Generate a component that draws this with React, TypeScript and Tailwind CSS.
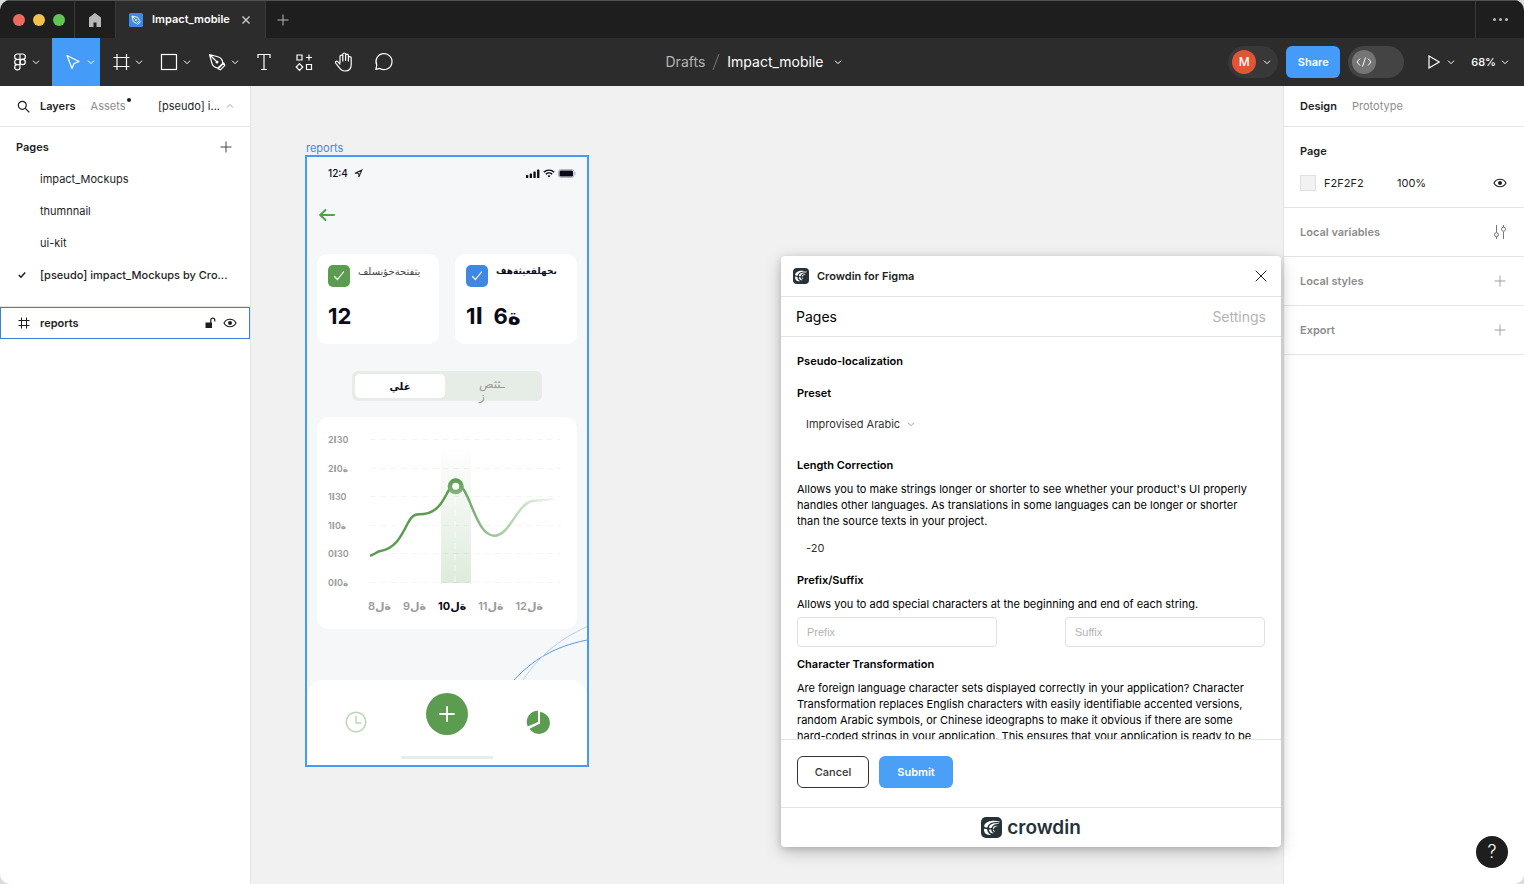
import type { ReactNode } from "react";
import { SiCrowdin } from "react-icons/si";

function Chevron({ className = "", up = false }: { className?: string; up?: boolean }) {
  return (
    <svg viewBox="0 0 12 12" width="12" height="12" fill="none" stroke="currentColor" className={`shrink-0 ${className}`} aria-hidden="true">
      <path d={up ? "M3 7.5 6 4.5 9 7.5" : "M3 4.7 6 7.7 9 4.7"} />
    </svg>
  );
}

function Plus({ className = "" }: { className?: string }) {
  return (
    <svg viewBox="0 0 12 12" width="12" height="12" fill="none" stroke="currentColor" className={className} aria-hidden="true">
      <path d="M6 .5v11M.5 6h11" />
    </svg>
  );
}

function Eye() {
  return (
    <svg viewBox="0 0 14 10" width="14" height="10" fill="none" stroke="#1e1e1e" aria-hidden="true">
      <path d="M1 5C2.2 2.6 4.400 1.200 7 1.200S11.800 2.600 13 5C11.800 7.400 9.600 8.800 7 8.800S2.200 7.400 1 5Z" strokeWidth="1.100" />
      <circle cx="7" cy="5" r="2" fill="#1e1e1e" stroke="none" />
    </svg>
  );
}

function CrowdinMark({ className }: { className: string }) {
  return (
    <span className={`flex items-center justify-center bg-[#263238] text-white ${className}`}>
      <SiCrowdin className="h-3/4 w-3/4" aria-hidden="true" />
    </span>
  );
}

function TitleBar() {
  return (
    <header className="flex h-[38px] shrink-0 border-t border-[#4f5251] bg-[#1e1e1e]">
      <div className="flex w-[75px] items-center gap-2 border-r border-[#3a3a3a] pl-[13px]">
        <span className="size-3 rounded-full bg-[#ed6a5e]" />
        <span className="size-3 rounded-full bg-[#f5bf4f]" />
        <span className="size-3 rounded-full bg-[#61c554]" />
      </div>
      <button aria-label="Home" className="flex w-[41px] items-center justify-center border-r border-[#3a3a3a]">
        <svg viewBox="0 0 14 14" width="14" height="14" fill="#b8b8b8" aria-hidden="true">
          <path d="M7 0 1 4.600V14h4.500V9.500h3V14H13V4.600Z" />
        </svg>
      </button>
      <div className="flex w-[150px] items-center border-r border-[#3a3a3a] bg-[#2c2c2c] pl-[13px] text-white">
        <svg viewBox="0 0 14 14" width="14" height="14" fill="none" stroke="#fff" aria-hidden="true">
          <rect width="14" height="14" rx="1.500" fill="#3d8ae6" stroke="none" />
          <path d="M3 3l5.500 1.200 2 3.300-3 3-3.300-2ZM3 3l3.600 3.600" strokeWidth=".9" />
          <circle cx="7" cy="7" r=".9" fill="#fff" stroke="none" />
          <path d="M8.400 11.600l3.200-3.200" />
        </svg>
        <span className="ml-[9px] text-[11px] font-semibold">Impact_mobile</span>
        <button aria-label="Close tab" className="ml-[11px] text-[#c4c4c4]">
          <svg viewBox="0 0 10 10" width="10" height="10" fill="none" stroke="currentColor" strokeWidth="1.500" aria-hidden="true">
            <path d="M1.500 1.500l7 7M8.500 1.500l-7 7" />
          </svg>
        </button>
      </div>
      <button aria-label="New tab" className="flex w-[34px] items-center justify-center text-[#b8b8b8]">
        <Plus />
      </button>
      <button aria-label="More" className="ml-auto flex w-[49px] items-center justify-center gap-[3px] border-l border-[#3a3a3a]">
        <span className="size-[3px] rounded-full bg-[#b8b8b8]" />
        <span className="size-[3px] rounded-full bg-[#b8b8b8]" />
        <span className="size-[3px] rounded-full bg-[#b8b8b8]" />
      </button>
    </header>
  );
}

function MenuTool({ label, active = false, children }: { label: string; active?: boolean; children: ReactNode }) {
  return (
    <button aria-label={label} className={`flex h-12 w-12 items-center pl-[9px] ${active ? "bg-[#459cf8]" : ""}`}>
      <svg viewBox="0 0 24 24" width="24" height="24" fill="none" stroke="#fff" strokeWidth="1.200" aria-hidden="true">
        {children}
      </svg>
      <Chevron />
    </button>
  );
}

function Tool({ label, children }: { label: string; children: ReactNode }) {
  return (
    <button aria-label={label} className="flex h-12 w-10 items-center justify-center">
      <svg viewBox="0 0 24 24" width="24" height="24" fill="none" stroke="#fff" strokeWidth="1.200" aria-hidden="true">
        {children}
      </svg>
    </button>
  );
}

function Toolbar() {
  return (
    <div className="flex h-12 shrink-0 items-center bg-[#2c2c2c] text-white">
      <div className="flex flex-1">
        <button aria-label="Main menu" className="flex h-12 w-[52px] items-center pl-2.5">
          <svg viewBox="0 0 20 20" width="20" height="20" fill="none" stroke="#fff" strokeWidth="1.200" aria-hidden="true">
            <path d="M10 2H7.300a2.650 2.650 0 0 0 0 5.300H10ZM10 2h2.700a2.650 2.650 0 0 1 0 5.300H10ZM10 7.300H7.300a2.650 2.650 0 0 0 0 5.300H10ZM10 12.600H7.300a2.650 2.650 0 1 0 2.700 2.650Z" />
            <circle cx="12.650" cy="9.950" r="2.650" />
          </svg>
          <Chevron />
        </button>
        <MenuTool label="Move" active>
          <path d="M6 5.500l12 6-5 2-2 5Z" strokeLinejoin="round" />
        </MenuTool>
        <MenuTool label="Frame">
          <path d="M8 4v16M17.500 4v16M4.500 7.500h16M4.500 16.500h16" />
        </MenuTool>
        <MenuTool label="Rectangle">
          <rect x="4.500" y="4.500" width="15" height="15" />
        </MenuTool>
        <MenuTool label="Pen">
          <path d="M4.500 4.500l9 2.500c2.500.8 4.500 3.600 4.200 6.300l-4.400 4.400C10.500 18 7.800 16 7 13.500ZM4.500 4.500l6.500 6.500M13 18.800l5.800-5.800 1 2.400-4.400 4.400Z" strokeLinejoin="round" />
          <circle cx="12" cy="12" r="1.500" fill="#fff" stroke="none" />
        </MenuTool>
        <Tool label="Text">
          <path d="M6 8V4.500h12V8M12 4.500v15M9 19.500h6" />
        </Tool>
        <Tool label="Resources">
          <path d="M5 5h5v5H5ZM14.500 14.500h5v5h-5ZM7.500 13.600l3.300 3.400-3.300 3.400L4.200 17ZM17 4.500v6M14 7.500h6" />
        </Tool>
        <Tool label="Hand">
          <path d="M8 12.500V6.600a1.400 1.400 0 0 1 2.800 0V11M10.800 10.500V4.400a1.400 1.400 0 0 1 2.800 0v6.100M13.600 10.500V5.500a1.400 1.400 0 0 1 2.800 0V11M16.400 11V8a1.400 1.400 0 0 1 2.800 0v6.500c0 4-2.500 6.500-6.200 6.500-3 0-4.500-1.200-6-3.700L3.600 13c-.7-1.300.9-2.500 2-1.400L8 14" strokeLinecap="round" strokeLinejoin="round" />
        </Tool>
        <Tool label="Comment">
          <path d="M3.800 19.300l1-4.200a8 8 0 1 1 3 3.300Z" strokeLinejoin="round" />
        </Tool>
      </div>
      <div className="flex items-center pr-0.5 text-sm">
        <span className="text-[#b3b3b3]">Drafts</span>
        <svg viewBox="0 0 8 16" width="8" height="16" stroke="#7a7a7a" className="mx-[7px]" aria-hidden="true">
          <path d="M1 16 7 0" />
        </svg>
        <button className="flex items-center gap-2">
          Impact_mobile
          <Chevron />
        </button>
      </div>
      <div className="flex flex-1 items-center justify-end pr-[13px] text-[11px] font-medium">
        <button aria-label="Account" className="flex h-8 w-[50px] items-center gap-[5px] rounded-full bg-[#383838] pl-1">
          <span className="flex size-6 items-center justify-center rounded-full bg-[#e25534] text-xs">M</span>
          <Chevron />
        </button>
        <button className="ml-2 h-8 w-[54px] rounded-md bg-[#459cf8] font-semibold">Share</button>
        <button aria-label="Dev mode" className="ml-2 flex h-8 w-14 items-center rounded-full bg-[#444] pl-1">
          <span className="flex size-6 items-center justify-center rounded-full bg-[#757575]">
            <svg viewBox="0 0 16 12" width="16" height="12" fill="none" stroke="#fff" aria-hidden="true">
              <path d="M4 2.500 1 6l3 3.500M12 2.500 15 6l-3 3.500M9.500 1.500l-3 9" />
            </svg>
          </span>
        </button>
        <button aria-label="Present" className="ml-6 flex items-center gap-[5px]">
          <svg viewBox="0 0 12 14" width="12" height="14" fill="none" stroke="#fff" strokeWidth="1.200" aria-hidden="true">
            <path d="M1 1l10.300 6L1 13Z" />
          </svg>
          <Chevron />
        </button>
        <button className="ml-3.5 flex items-center gap-[3px]">
          68%
          <Chevron />
        </button>
      </div>
    </div>
  );
}

const pages = ["impact_Mockups", "thumnnail", "ui-kit"];

function LayersPanel() {
  return (
    <aside className="w-[251px] shrink-0 border-r border-[#e4e4e4] bg-white text-[11px] text-[#1e1e1e]">
      <div className="flex h-[41px] items-center border-b border-[#e4e4e4] pl-[17px]">
        <button aria-label="Search">
          <svg viewBox="0 0 13 13" width="13" height="13" fill="none" stroke="currentColor" strokeWidth="1.200" aria-hidden="true">
            <circle cx="5.300" cy="5.300" r="4" />
            <path d="M8.300 8.300l4 4" />
          </svg>
        </button>
        <button className="ml-2.5 font-semibold">Layers</button>
        <button className="relative ml-[15px] text-[#8c8c8c]">
          Assets
          <span className="absolute -right-1.5 top-0 size-1 rounded-full bg-[#1e1e1e]" />
        </button>
        <button className="ml-auto mr-3.5 flex items-center gap-1">
          [pseudo] i...
          <Chevron up className="text-[#a0a0a0]" />
        </button>
      </div>
      <div className="mt-1 flex h-8 items-center justify-between pl-4 pr-[18px]">
        <h2 className="font-semibold">Pages</h2>
        <button aria-label="Add page">
          <Plus className="text-[#444]" />
        </button>
      </div>
      <ul>
        {pages.map((name) => (
          <li key={name} className="flex h-8 items-center pl-10">
            {name}
          </li>
        ))}
        <li className="flex h-8 items-center font-medium">
          <svg viewBox="0 0 8 8" width="8" height="8" fill="none" stroke="currentColor" strokeWidth="1.500" className="ml-[18px] mr-3.5" aria-hidden="true">
            <path d="M.8 4l2.200 2.200L7.200 1.500" />
          </svg>
          [pseudo] impact_Mockups by Cro...
        </li>
      </ul>
      <div className="h-4 border-b border-[#e4e4e4]" />
      <div className="flex h-8 items-center border border-[#3d7fd9] pl-[17px] pr-3 font-semibold">
        <svg viewBox="0 0 12 12" width="12" height="12" fill="none" stroke="currentColor" aria-hidden="true">
          <path d="M3.500 .5v11M8.500 .5v11M.5 3.500h11M.5 8.500h11" />
        </svg>
        <span className="ml-2.5">reports</span>
        <svg viewBox="0 0 11 12" width="11" height="12" fill="none" stroke="currentColor" className="ml-auto mr-[7px]" aria-hidden="true">
          <rect x=".5" y="5.500" width="6.500" height="5.500" fill="currentColor" stroke="none" />
          <path d="M5.800 6V3.200a2 2 0 0 1 4 0V4.500" strokeWidth="1.200" />
        </svg>
        <Eye />
      </div>
    </aside>
  );
}

function StatCard({ color, label, bold = false, children }: { color: string; label: string; bold?: boolean; children: ReactNode }) {
  return (
    <div className="h-[90px] flex-1 rounded-[10px] bg-white px-[11px] pt-[11px]">
      <div className="flex gap-2">
        <span className={`flex size-[22px] items-center justify-center rounded-[5px] ${color}`}>
          <svg viewBox="0 0 12 12" width="12" height="12" fill="none" stroke="#fff" strokeWidth="1.200" strokeLinecap="round" strokeLinejoin="round" aria-hidden="true">
            <path d="M1.500 6.500l3 3L10.500 2" />
          </svg>
        </span>
        <span dir="rtl" className={`leading-3 ${bold ? "text-[9px] font-bold" : "text-[10px] text-[#444]"}`}>
          {label}
        </span>
      </div>
      <div className="mt-[15px] whitespace-pre text-[22px] font-bold leading-7 [unicode-bidi:bidi-override]">{children}</div>
    </div>
  );
}

const yLabels = ["2ا30", "2ا0ة", "1ا30", "1ا0ة", "0ا30", "0ا0ة"];
const xLabels = ["8ةل", "9ةل", "10ةل", "11ةل", "12ةل"];
const gridRows = [6, 35, 63, 92, 120, 149];

function ChartCard() {
  return (
    <div className="mt-4 h-[212px] rounded-xl bg-white px-[11px] pt-4">
      <div className="flex">
        <div className="mt-px flex h-[155px] w-[42px] flex-col justify-between text-[9px] font-semibold leading-3 text-[#9b9b9b]">
          {yLabels.map((l) => (
            <span key={l} className="[unicode-bidi:bidi-override]">
              {l}
            </span>
          ))}
        </div>
        <svg viewBox="0 0 192 155" width="192" height="155" fill="none" className="overflow-visible" aria-hidden="true">
          <defs>
            <linearGradient id="band" x1="0" y1="0" x2="0" y2="1">
              <stop offset="0" stopColor="#5b9c50" stopOpacity="0" />
              <stop offset="1" stopColor="#5b9c50" stopOpacity=".2" />
            </linearGradient>
            <linearGradient id="line" gradientUnits="userSpaceOnUse" x1="0" y1="0" x2="186" y2="0">
              <stop offset="0" stopColor="#5b9c50" />
              <stop offset=".45" stopColor="#5b9c50" />
              <stop offset=".65" stopColor="#5b9c50" stopOpacity=".6" />
              <stop offset="1" stopColor="#5b9c50" stopOpacity=".05" />
            </linearGradient>
            <linearGradient id="dot" x1="0" y1="0" x2="0" y2="1">
              <stop offset="0" stopColor="#5b9c50" />
              <stop offset="1" stopColor="#83b57b" />
            </linearGradient>
          </defs>
          {gridRows.map((y) => (
            <path key={y} d={`M0 ${y + 0.5}H191`} stroke="#f4f5f4" strokeDasharray="6 4.400" />
          ))}
          <rect x="71" y="12" width="30" height="138" fill="url(#band)" />
          <path d="M85 66V149" stroke="#fff" strokeDasharray="6 5" opacity=".8" />
          <path
            d="M0 122.700C4 122 6 119.200 9.300 118.300C25 116 31 104 38.300 89.300C42 83 44 81.500 49 81.300C62 81.500 69 76 76.700 61C80 54 82.500 51 86 51C93 51 98 65 101.700 73.700C108 89 114 102.500 124.300 102.700C140 102.500 147 71 162.300 68L184 66"
            stroke="url(#line)"
            strokeWidth="2.500"
          />
          <circle cx="85.700" cy="53.300" r="8" fill="url(#dot)" />
          <circle cx="85.700" cy="53.300" r="3.500" fill="#fff" />
        </svg>
      </div>
      <div className="mt-[9px] flex justify-between pl-10 pr-[23px] text-[11px] font-semibold leading-4 text-[#9b9b9b]">
        {xLabels.map((l, i) => (
          <span key={l} className={i === 2 ? "font-bold text-[#0a0a18]" : ""}>
            {l}
          </span>
        ))}
      </div>
    </div>
  );
}

function PhoneFrame() {
  return (
    <div className="absolute left-[54px] top-[54px]">
      <div className="h-[15px] pl-px text-[11px] leading-4 text-[#3d8ae6]">reports</div>
      <div className="w-[284px] border-2 border-[#459cf8] bg-[#f5f7f9] text-[#0a0a18]">
        <div className="flex h-[33px] items-center pl-[21px] pr-[11px] text-[10px] font-medium">
          12:4
          <svg viewBox="0 0 8 8" width="9" height="9" fill="none" stroke="#222" className="ml-1.5" aria-hidden="true">
            <path d="M.8 3.800 7 1 4.300 7.200V3.800Z" strokeWidth=".9" />
          </svg>
          <div className="ml-auto flex items-center gap-[3px]" aria-hidden="true">
            <svg viewBox="0 0 14 9" width="14" height="9" fill="#0a0a18">
              <rect y="6" width="2.300" height="3" rx=".6" />
              <rect x="3.700" y="4.500" width="2.300" height="4.500" rx=".6" />
              <rect x="7.400" y="2.500" width="2.300" height="6.500" rx=".6" />
              <rect x="11.100" y=".5" width="2.300" height="8.500" rx=".6" />
            </svg>
            <svg viewBox="0 0 12 9" width="12" height="9" fill="none" stroke="#0a0a18" strokeWidth="1.400">
              <path d="M.8 3.200a7.500 7.500 0 0 1 10.400 0M2.800 5.300a4.600 4.600 0 0 1 6.400 0" />
              <path d="M4.500 6.800a2.300 2.300 0 0 1 3 0L6 8.600Z" fill="#0a0a18" stroke="none" />
            </svg>
            <svg viewBox="0 0 18 9" width="18" height="9" fill="none">
              <rect x=".5" y=".5" width="15.500" height="8" rx="2.300" stroke="#b5b6bb" />
              <rect x="1.500" y="1.500" width="13.500" height="6" rx="1.300" fill="#0a0a18" />
              <path d="M17 3v3" stroke="#b5b6bb" />
            </svg>
          </div>
        </div>
        <div className="flex h-[50px] items-center pl-3">
          <svg viewBox="0 0 16 12" width="16" height="12" fill="none" stroke="#5b9c50" strokeWidth="2" strokeLinecap="round" strokeLinejoin="round" aria-hidden="true">
            <path d="M15 6H1.500M6.500 1 1.200 6 6.500 11" />
          </svg>
        </div>
        <div className="px-2.5 pt-3.5">
          <div className="flex gap-4">
            <StatCard color="bg-[#5b9c50]" label="يثفثحةخؤنسلف">
              12
            </StatCard>
            <StatCard color="bg-[#3f87e0]" label="ىخهلقعيثةهف" bold>
              {"1ا  6ة"}
            </StatCard>
          </div>
          <div className="mx-auto mt-[27px] flex h-[30px] w-[190px] rounded-md bg-[#e6ede6] p-[3px] leading-6">
            <span dir="rtl" className="h-6 w-[90px] rounded-[5px] bg-white text-center text-[10px] font-bold leading-6">
              غلي
            </span>
            <span className="flex flex-1 flex-col items-start pl-[34px] pt-1 text-xs leading-3 text-[#9b9b9b]">
              <span dir="rtl">ـثثص</span>
              <span dir="rtl">ز</span>
            </span>
          </div>
          <ChartCard />
        </div>
        <div className="flex h-[51px] justify-end">
          <svg viewBox="0 0 74 51" width="74" height="51" fill="none" className="overflow-visible" aria-hidden="true">
            <path d="M1 51C20 31 40 18 74 11" stroke="#5a9be8" />
            <path d="M10 51C25 29 44 11 74 -2.300" stroke="#b4d1f3" />
          </svg>
        </div>
        <div className="flex h-[85px] flex-col items-center rounded-t-2xl bg-white pt-[13px]">
          <div className="flex w-full items-center justify-between pl-[38px] pr-[37px]">
            <svg viewBox="0 0 22 22" width="22" height="22" fill="none" stroke="#b9d7b4" strokeWidth="1.400" className="mt-4" aria-hidden="true">
              <circle cx="11" cy="11" r="9.800" />
              <path d="M11 4.500V12h5.500" />
            </svg>
            <button aria-label="Add" className="flex size-[42px] items-center justify-center rounded-full bg-[#5b9c50]">
              <svg viewBox="0 0 16 16" width="16" height="16" stroke="#fff" strokeWidth="1.800" strokeLinecap="round" aria-hidden="true">
                <path d="M8 1v14M1 8h14" />
              </svg>
            </button>
            <svg viewBox="0 0 24 24" width="24" height="24" className="mt-4" aria-hidden="true">
              <path d="M12 .7A11.300 11.300 0 0 0 1.700 16.600L12 12Z" fill="#5b9c50" />
              <path d="M14 2A11 11 0 1 1 3.600 18.800L14 13.500Z" fill="#5b9c50" />
            </svg>
          </div>
          <div className="mt-[21px] h-[3px] w-[92px] bg-[#e9ecea]" />
        </div>
      </div>
    </div>
  );
}

function CrowdinDialog() {
  return (
    <section
      role="dialog"
      aria-label="Crowdin for Figma"
      className="absolute right-[243px] top-[170px] flex h-[591px] w-[500px] flex-col rounded-sm bg-white text-[11px] leading-4 text-black shadow-[0_5px_17px_rgba(0,0,0,0.2),0_2px_7px_rgba(0,0,0,0.15)]"
    >
      <div className="flex h-[41px] shrink-0 items-center border-b border-[#e4e4e4] px-3">
        <CrowdinMark className="size-4 rounded" />
        <h2 className="ml-2 font-semibold text-[#1e1e1e]">Crowdin for Figma</h2>
        <button aria-label="Close" className="ml-auto mr-0.5">
          <svg viewBox="0 0 12 12" width="12" height="12" fill="none" stroke="#1e1e1e" aria-hidden="true">
            <path d="M.7.7l10.600 10.600M11.300.7.7 11.300" />
          </svg>
        </button>
      </div>
      <nav className="flex h-10 shrink-0 items-center justify-between border-b border-[#e4e4e4] px-[15px] text-sm">
        <button>Pages</button>
        <button className="text-[#b3b3b3]">Settings</button>
      </nav>
      <div className="min-h-0 flex-1 overflow-hidden px-4 pt-4">
        <h3 className="font-semibold">Pseudo-localization</h3>
        <label htmlFor="preset" className="mt-4 block font-semibold">
          Preset
        </label>
        <div className="mt-2 flex h-[30px] items-center text-[#333]">
          <div className="relative">
            <select id="preset" className="appearance-none bg-transparent pl-[9px] pr-5 outline-none">
              <option>Improvised Arabic</option>
            </select>
            <Chevron className="pointer-events-none absolute right-1 top-0.5 text-[#999]" />
          </div>
        </div>
        <label htmlFor="length" className="mt-[18px] block font-semibold">
          Length Correction
        </label>
        <p className="mt-2 pr-2">
          Allows you to make strings longer or shorter to see whether your product's UI properly handles other languages. As translations in some languages can be longer or shorter than the source texts in your project.
        </p>
        <input id="length" defaultValue="-20" className="mt-1 block h-[30px] w-full pl-[9px] text-[#333] outline-none" />
        <h3 className="mt-[9px] font-semibold">Prefix/Suffix</h3>
        <p className="mt-2 pr-2">Allows you to add special characters at the beginning and end of each string.</p>
        <div className="mt-[5px] flex justify-between font-['Liberation_Sans',sans-serif]">
          <input aria-label="Prefix" placeholder="Prefix" className="h-[30px] w-[200px] rounded-sm border border-[#e0e0e0] px-[9px] outline-none placeholder:text-[#b3b3b3]" />
          <input aria-label="Suffix" placeholder="Suffix" className="h-[30px] w-[200px] rounded-sm border border-[#e0e0e0] px-[9px] outline-none placeholder:text-[#b3b3b3]" />
        </div>
        <h3 className="mt-[9px] font-semibold">Character Transformation</h3>
        <p className="mt-2 pr-2">
          Are foreign language character sets displayed correctly in your application? Character Transformation replaces English characters with easily identifiable accented versions, random Arabic symbols, or Chinese ideographs to make it obvious if there are some <span className="whitespace-nowrap">hard-coded</span> strings in your application. This ensures that your application is ready to be
        </p>
      </div>
      <div className="flex h-[68px] shrink-0 gap-2.5 border-t border-[#e4e4e4] px-4 pt-4">
        <button className="h-8 w-[72px] rounded-md border border-[#333] font-medium text-[#333]">Cancel</button>
        <button className="h-8 w-[74px] rounded-md bg-[#4a9ff7] font-semibold text-white">Submit</button>
      </div>
      <div className="flex h-10 shrink-0 items-center justify-center gap-[5px] border-t border-[#e4e4e4]">
        <CrowdinMark className="size-[21px] rounded-[5px]" />
        <span className="text-[19px] font-semibold leading-6 text-[#263238]">crowdin</span>
      </div>
    </section>
  );
}

function PanelRow({ title, children }: { title: string; children: ReactNode }) {
  return (
    <div className="flex h-[49px] items-center justify-between border-b border-[#e4e4e4] pl-4 pr-[18px]">
      <h2 className="font-semibold text-[#8c8c8c]">{title}</h2>
      <button aria-label={title} className="text-[#a0a0a0]">
        {children}
      </button>
    </div>
  );
}

function DesignPanel() {
  return (
    <aside className="w-[241px] shrink-0 border-l border-[#e4e4e4] bg-white text-[11px] text-[#1e1e1e]">
      <div className="flex h-[41px] items-center gap-[15px] border-b border-[#e4e4e4] px-4">
        <button className="font-semibold">Design</button>
        <button className="text-[#8c8c8c]">Prototype</button>
      </div>
      <div className="h-[81px] border-b border-[#e4e4e4] pl-4 pr-[17px] pt-2">
        <h2 className="flex h-8 items-center font-semibold">Page</h2>
        <div className="flex h-8 items-center">
          <span className="size-4 border border-[#e0e0e0] bg-[#f2f2f2]" />
          <span className="ml-2 w-[73px]">F2F2F2</span>
          <span>100%</span>
          <button aria-label="Toggle page colour" className="ml-auto">
            <Eye />
          </button>
        </div>
      </div>
      <PanelRow title="Local variables">
        <svg viewBox="0 0 12 14" width="12" height="14" fill="none" stroke="#777" aria-hidden="true">
          <path d="M2.500 0v7.500M2.500 12v2M9.500 0v2M9.500 6.500V14" />
          <circle cx="2.500" cy="9.700" r="2" />
          <circle cx="9.500" cy="4.200" r="2" />
        </svg>
      </PanelRow>
      <PanelRow title="Local styles">
        <Plus />
      </PanelRow>
      <PanelRow title="Export">
        <Plus />
      </PanelRow>
    </aside>
  );
}

export default function App() {
  return (
    <div className="bg-[#dcdedd] font-[Inter,'DejaVu_Sans',sans-serif]">
      <div className="flex h-screen flex-col overflow-hidden rounded-[10px]">
        <TitleBar />
        <Toolbar />
        <div className="relative flex min-h-0 flex-1">
          <LayersPanel />
          <main className="relative flex-1 overflow-hidden bg-[#f1f1f1]">
            <PhoneFrame />
          </main>
          <DesignPanel />
          <CrowdinDialog />
          <button aria-label="Help" className="absolute bottom-4 right-4 size-8 rounded-full bg-[#1e1e1e] text-lg font-light text-white">
            ?
          </button>
        </div>
      </div>
    </div>
  );
}
